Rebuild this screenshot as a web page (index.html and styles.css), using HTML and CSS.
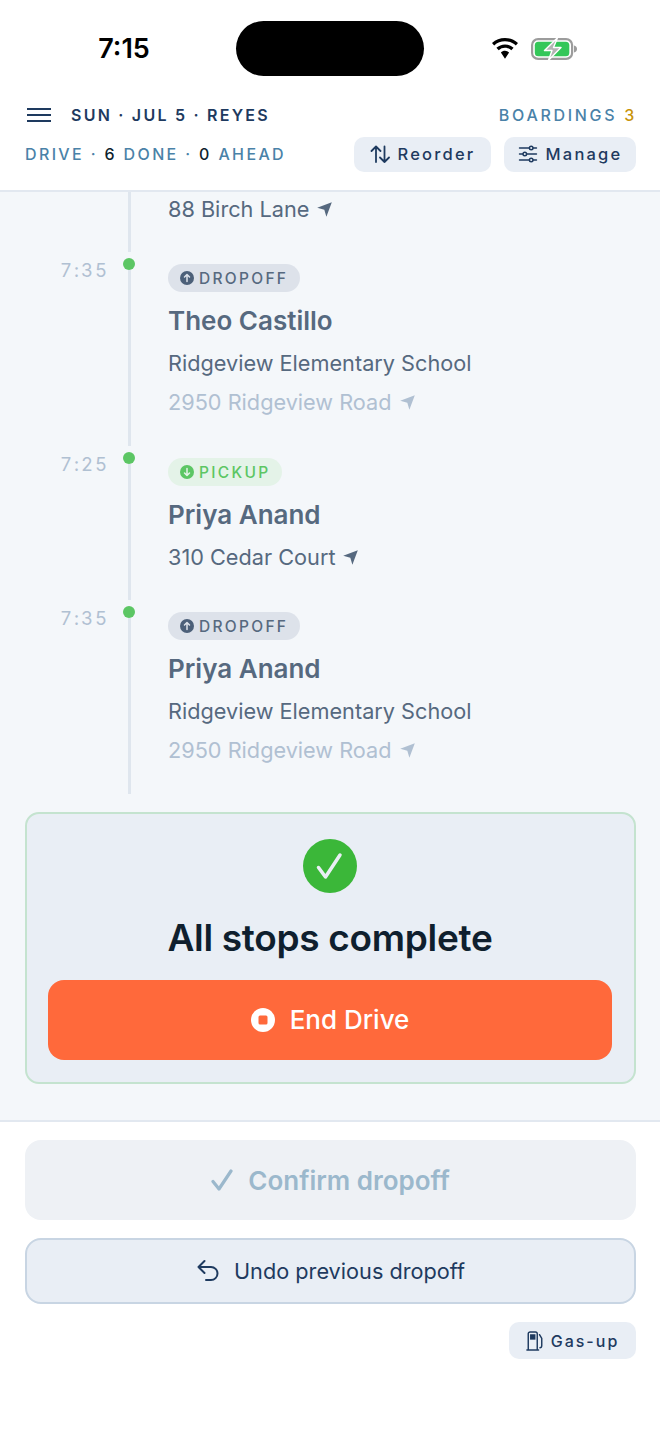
FILE: index.html
```html
<!DOCTYPE html>
<html lang="en">
<head>
<meta charset="utf-8">
<title>Drive</title>
<link rel="stylesheet" href="styles.css">
</head>
<body>
<div class="page">
  <header class="header">
    <div class="status">
      <div class="clock">7:15</div>
      <div class="island"></div>
      <div class="status-icons">
        <svg class="wifi" viewBox="0 0 28 21"><path d="M14 3.200c4.100 0 7.900 1.600 10.800 4.200l2.200-2.400A19.400 19.400 0 0 0 14 0 19.400 19.400 0 0 0 1 5l2.200 2.400A16 16 0 0 1 14 3.200z"/><path d="M14 9.800c2.400 0 4.600.9 6.300 2.400l2.300-2.400A12.600 12.600 0 0 0 14 6.400c-3.300 0-6.300 1.300-8.600 3.400l2.300 2.400A9.400 9.400 0 0 1 14 9.800z"/><path d="M14 12.800c-1.600 0-3 .6-4.100 1.600L14 20.800l4.100-6.400a6 6 0 0 0-4.100-1.600z"/></svg>
        <svg class="battery" viewBox="0 0 47 24"><rect x="1.100" y="2.100" width="40" height="19.800" rx="6" fill="none" stroke="#9c9c9c" stroke-width="2.200"/><rect x="3.800" y="4.800" width="34.500" height="14.400" rx="3.500" fill="#34c759"/><path d="M43 8.500c2 .4 3 1.800 3 3.500s-1 3.100-3 3.500z" fill="#9c9c9c"/><path d="M26.500 .8 13.500 13.500H21L17.500 23.200 30 10.500H22.500z" fill="#b4b4b4" stroke="#fff" stroke-width="1.400" stroke-linejoin="round"/></svg>
      </div>
    </div>
    <div class="nav-row">
      <div class="nav-left">
        <svg class="menu" viewBox="0 0 24 14"><path d="M0 1h24M0 7h24M0 13h24"/></svg>
        <span class="crumb">SUN · JUL 5 · REYES</span>
      </div>
      <span class="boardings">BOARDINGS <b class="amber">3</b></span>
    </div>
    <div class="tool-row">
      <span class="progress">DRIVE · <b>6</b> DONE · <b>0</b> AHEAD</span>
      <div class="tools">
        <div class="tool reorder">
          <svg class="ico" viewBox="0 0 20 20"><path d="M6 18V2.500M1.500 7 6 2.500 10.500 7M14.500 2.500V18M10 13.500l4.500 4.500 4.500-4.500"/></svg>
          Reorder
        </div>
        <div class="tool manage">
          <svg class="ico ico-thin" viewBox="0 0 20 20"><path d="M1.500 4h10M15 4h3.500M1.500 10H5M8.500 10h10M1.500 16h10M15 16h3.500"/><circle cx="13.200" cy="4" r="1.800"/><circle cx="6.800" cy="10" r="1.800"/><circle cx="13.200" cy="16" r="1.800"/></svg>
          Manage
        </div>
      </div>
    </div>
  </header>

  <main class="main">
    <section class="stop stop-clipped">
      <div class="time"></div>
      <div class="rail"><div class="line"></div></div>
      <div class="body">
        <div class="addr">88 Birch Lane <svg class="arrow" viewBox="0 0 16 16"><path d="M15.800.2 10 15.800 7.800 8.200.2 6.200z"/></svg></div>
      </div>
    </section>

    <section class="stop">
      <div class="time">7:35</div>
      <div class="rail"><div class="dot"></div><div class="line"></div></div>
      <div class="body">
        <div class="badge badge-drop"><svg class="badge-ico" viewBox="0 0 14 14"><circle cx="7" cy="7" r="7" class="disc"/><path d="M7 10.500v-7M4.500 6 7 3.500 9.500 6" class="glyph"/></svg>DROPOFF</div>
        <h2 class="name">Theo Castillo</h2>
        <div class="addr">Ridgeview Elementary School</div>
        <div class="addr addr-dim">2950 Ridgeview Road <svg class="arrow" viewBox="0 0 16 16"><path d="M15.800.2 10 15.800 7.800 8.200.2 6.200z"/></svg></div>
      </div>
    </section>

    <section class="stop">
      <div class="time">7:25</div>
      <div class="rail"><div class="dot"></div><div class="line"></div></div>
      <div class="body">
        <div class="badge badge-pick"><svg class="badge-ico" viewBox="0 0 14 14"><circle cx="7" cy="7" r="7" class="disc"/><path d="M7 3.500v7M4.500 8 7 10.500 9.500 8" class="glyph"/></svg>PICKUP</div>
        <h2 class="name">Priya Anand</h2>
        <div class="addr">310 Cedar Court <svg class="arrow" viewBox="0 0 16 16"><path d="M15.800.2 10 15.800 7.800 8.200.2 6.200z"/></svg></div>
      </div>
    </section>

    <section class="stop">
      <div class="time">7:35</div>
      <div class="rail"><div class="dot"></div><div class="line"></div></div>
      <div class="body">
        <div class="badge badge-drop"><svg class="badge-ico" viewBox="0 0 14 14"><circle cx="7" cy="7" r="7" class="disc"/><path d="M7 10.500v-7M4.500 6 7 3.500 9.500 6" class="glyph"/></svg>DROPOFF</div>
        <h2 class="name">Priya Anand</h2>
        <div class="addr">Ridgeview Elementary School</div>
        <div class="addr addr-dim">2950 Ridgeview Road <svg class="arrow" viewBox="0 0 16 16"><path d="M15.800.2 10 15.800 7.800 8.200.2 6.200z"/></svg></div>
      </div>
    </section>

    <section class="done-card">
      <svg class="done-check" viewBox="0 0 54 54"><circle cx="27" cy="27" r="27" fill="#3bb739"/><path d="M15.500 28.500 22.500 38 37 16" fill="none" stroke="#e9eef5" stroke-width="3.500" stroke-linecap="round" stroke-linejoin="round"/></svg>
      <h1 class="done-title">All stops complete</h1>
      <div class="end-btn">
        <svg class="end-ico" viewBox="0 0 24 24"><circle cx="12" cy="12" r="12" fill="#fff"/><rect x="7.500" y="7.500" width="9" height="9" rx="1.500" fill="#ff693b"/></svg>
        End Drive
      </div>
    </section>
  </main>

  <footer class="footer">
    <div class="confirm">
      <svg class="confirm-ico" viewBox="0 0 22 22"><path d="M2 12.500 8 20 20 2"/></svg>
      Confirm dropoff
    </div>
    <div class="undo">
      <svg class="undo-ico" viewBox="0 0 24 24"><path d="M8.500 2 2.500 8l6 6M2.500 8h12.500a6.500 6.500 0 0 1 0 13h-5"/></svg>
      Undo previous dropoff
    </div>
    <div class="gas-row">
      <div class="gas">
        <svg class="gas-ico" viewBox="0 0 20 22"><path class="gas-line" d="M1 21h13M2.500 21V3a2 2 0 0 1 2-2h6a2 2 0 0 1 2 2v18M15 4l2.500 4v8c0 1.500-.7 2.500-2 2.500"/><rect x="4.500" y="3.500" width="6" height="6" fill="#1e3a5f"/></svg>
        Gas-up
      </div>
    </div>
  </footer>
</div>
</body>
</html>
```

FILE: styles.css
```css
* { box-sizing: border-box; }
html, body { margin: 0; padding: 0; }
body { font-family: Inter, "Liberation Sans", sans-serif; background: #fff; }
.page { width: 660px; height: 1434px; display: flex; flex-direction: column; overflow: hidden; background: #fff; }

.header { height: 192px; border-bottom: 2px solid #e2e8f0; background: #fff; flex: none; }
.status { display: grid; grid-template-columns: 236px 188px 236px; padding-top: 21px; height: 97px; }
.clock { font-size: 27px; font-weight: 600; color: #000; line-height: 55px; text-align: center; padding-left: 12px; }
.island { height: 55px; background: #000; border-radius: 28px; }
.status-icons { display: flex; align-items: center; height: 55px; padding-left: 67px; gap: 12px; }
.wifi { width: 28px; height: 21px; fill: #000; }
.battery { width: 47px; height: 24px; }

.nav-row { display: flex; justify-content: space-between; align-items: center; height: 36px; padding: 0 23px 0 27px; }
.nav-left { display: flex; align-items: center; gap: 20px; }
.menu { width: 24px; height: 14px; fill: none; stroke: #1e3a5f; stroke-width: 2; }
.crumb { font-size: 16px; font-weight: 600; letter-spacing: 2.230px; color: #1e3a5f; }
.boardings { font-size: 16px; font-weight: 500; letter-spacing: 2.700px; color: #4a82a8; }
.amber { font-weight: 500; color: #c8930a; }

.tool-row { display: flex; justify-content: space-between; align-items: center; height: 40px; padding: 0 24px 0 25px; margin-top: 1px; }
.progress { font-size: 16px; font-weight: 500; letter-spacing: 2.360px; color: #4a82a8; }
.progress b { font-weight: 500; color: #0f1f2e; }
.tools { display: flex; gap: 13px; }
.tool { display: flex; align-items: center; justify-content: center; gap: 8px; height: 35px; border-radius: 10px; background: #e9eef5; color: #1e3a5f; font-size: 16.500px; font-weight: 500; letter-spacing: 2.200px; }
.reorder { width: 137px; }
.manage { width: 132px; }
.ico { width: 20px; height: 20px; fill: none; stroke: #1e3a5f; stroke-width: 1.800; stroke-linecap: round; stroke-linejoin: round; }
.ico-thin { stroke-width: 1.400; }

.main { flex: 1; background: #f4f7fa; padding-top: 1px; padding-right: 24px; padding-left: 25px; overflow: hidden; }
.stop { display: flex; margin-top: 6px; }
.stop-clipped { margin-top: -1px; }
.time { width: 84px; text-align: right; font-size: 18.500px; line-height: 24px; font-weight: 400; font-variant-numeric: tabular-nums; letter-spacing: 2px; color: #b0c0d2; flex: none; }
.rail { width: 42px; display: flex; flex-direction: column; align-items: center; flex: none; margin-left: -1px; margin-right: 18px; }
.dot { width: 12px; height: 12px; border-radius: 50%; background: #5cc664; flex: none; }
.line { width: 3px; flex: 1; background: #dfe6ee; }
.body { flex: 1; padding-top: 6px; padding-bottom: 27px; }
.stop-clipped .body { padding-top: 1px; }
.badge { display: inline-flex; align-items: center; gap: 5px; height: 28px; padding: 0 12px; border-radius: 14px; font-size: 15.500px; font-weight: 500; letter-spacing: 2.300px; vertical-align: top; }
.badge-drop { background: #dde2ea; color: #56697f; }
.badge-pick { background: #e4f3e8; color: #5cc664; }
.badge-ico { width: 14px; height: 14px; flex: none; }
.badge-drop .disc { fill: #4c6079; }
.badge-pick .disc { fill: #5cc664; }
.badge-drop .glyph { stroke: #dde2ea; }
.badge-pick .glyph { stroke: #e4f3e8; }
.glyph { fill: none; stroke-width: 1.500; stroke-linecap: round; stroke-linejoin: round; }
.name { margin: 12px 0 9px; font-size: 26px; line-height: 34px; font-weight: 600; color: #56697f; }
.addr { font-size: 21.700px; line-height: 32px; color: #56697f; display: flex; align-items: center; gap: 8px; }
.addr + .addr { margin-top: 7px; }
.addr-dim { color: #b0c0d2; line-height: 33px; }
.arrow { width: 15px; height: 15px; fill: currentColor; flex: none; }

.done-card { margin-top: 18px; width: 611px; height: 272px; border: 2px solid #c4e3cf; border-radius: 14px; background: #e9eef5; display: flex; flex-direction: column; align-items: center; padding: 25px 22px 0 21px; }
.done-check { width: 54px; height: 54px; flex: none; }
.done-title { margin: 17px 0 0; font-size: 37px; line-height: 56px; font-weight: 600; letter-spacing: -0.300px; color: #0f1f2e; }
.end-btn { margin-top: 14px; width: 100%; height: 80px; padding-bottom: 1px; border-radius: 16px; background: #ff693b; color: #fff; font-size: 26px; font-weight: 500; display: flex; align-items: center; justify-content: center; gap: 15px; }
.end-ico { width: 24px; height: 24px; }

.footer { height: 314px; flex: none; border-top: 2px solid #e2e8f0; background: #fff; padding: 18px 24px 0 25px; display: flex; flex-direction: column; }
.confirm { height: 80px; border-radius: 16px; background: #eef1f5; color: #9bb8cc; font-size: 26px; font-weight: 600; display: flex; align-items: center; justify-content: center; gap: 15px; }
.confirm-ico { width: 22px; height: 22px; fill: none; stroke: #9bb8cc; stroke-width: 3.200; stroke-linecap: round; stroke-linejoin: round; }
.undo { margin-top: 18px; height: 66px; border: 2px solid #c8d5e3; border-radius: 16px; background: #e9eef5; color: #1e3a5f; font-size: 21.700px; font-weight: 400; display: flex; align-items: center; justify-content: center; gap: 14px; }
.undo-ico { width: 24px; height: 24px; fill: none; stroke: #1e3a5f; stroke-width: 2; stroke-linecap: round; stroke-linejoin: round; }
.gas-row { display: flex; justify-content: flex-end; margin-top: 18px; }
.gas { width: 127px; height: 37px; border-radius: 10px; background: #e9eef5; color: #1e3a5f; font-size: 16px; font-weight: 500; letter-spacing: 2px; display: flex; align-items: center; justify-content: center; gap: 7px; }
.gas-ico { width: 18px; height: 20px; }
.gas-line { fill: none; stroke: #1e3a5f; stroke-width: 1.600; stroke-linecap: round; stroke-linejoin: round; }
```
